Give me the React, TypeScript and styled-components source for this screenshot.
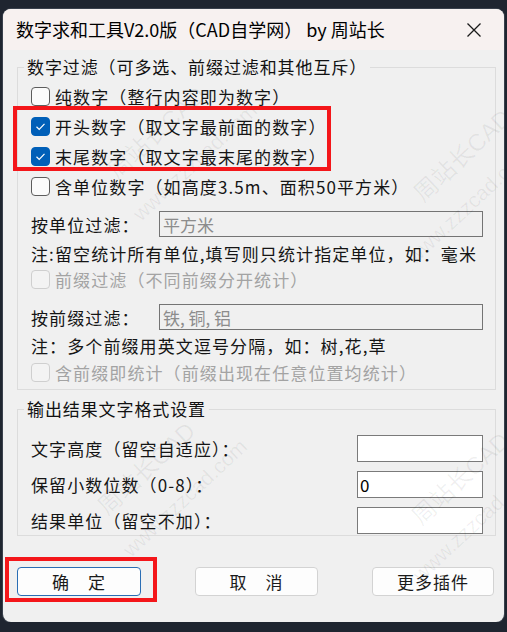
import React from "react";
import styled, { createGlobalStyle } from "styled-components";

const GlobalStyle = createGlobalStyle`
  html, body {
    margin: 0;
    padding: 0;
    background: #1f2530;
  }
  body {
    font-family: "Noto Sans CJK SC", "Noto Sans", sans-serif;
  }
`;

const Window = styled.div`
  position: relative;
  margin: 9px 3px 0;
  height: 613px;
  border-radius: 8px;
  overflow: hidden;
  background: #f0f0f0;
  box-shadow: 0 0 0 1px #39404c;
`;

const TitleBar = styled.div`
  display: flex;
  align-items: center;
  justify-content: space-between;
  height: 41px;
  padding: 0 22px 0 13px;
  background: #f7f1f0;
`;

const Title = styled.span`
  font-size: 18px;
  color: #000;
  line-height: 41px;
`;

const Close = styled.svg`
  width: 16px;
  height: 16px;
`;

const Body = styled.div`
  padding: 7px 8px 0 14px;
`;

const Group = styled.fieldset<{ $mt?: number; $pt: number; $pb: number }>`
  margin: ${(p) => p.$mt ?? 0}px 0 0;
  padding: ${(p) => p.$pt}px 13px ${(p) => p.$pb}px 13px;
  border: 1px solid #dcdcdc;
  min-width: 0;
  display: flex;
  flex-direction: column;
`;

const Legend = styled.legend`
  margin-left: -7px;
  padding: 0 3px;
  font-size: 17px;
  line-height: 20px;
  letter-spacing: 0.9px;
  color: #111;
`;

const Row = styled.div<{ $h: number; $mt?: number; $between?: boolean }>`
  display: flex;
  align-items: center;
  justify-content: ${(p) => (p.$between ? "space-between" : "flex-start")};
  height: ${(p) => p.$h}px;
  margin-top: ${(p) => p.$mt ?? 0}px;
`;

const Box = styled.span<{ $checked?: boolean; $disabled?: boolean }>`
  display: inline-flex;
  align-items: center;
  justify-content: center;
  box-sizing: border-box;
  width: 19px;
  height: 19px;
  margin-right: 5px;
  border-radius: 4px;
  border: 1px solid
    ${(p) => (p.$checked ? "#005fb8" : p.$disabled ? "#cfcfcf" : "#5d5d5d")};
  background: ${(p) => (p.$checked ? "#005fb8" : p.$disabled ? "#f3f3f3" : "#fbfbfb")};
`;

const Text = styled.span<{ $disabled?: boolean }>`
  font-size: 17px;
  letter-spacing: 1.1px;
  white-space: nowrap;
  color: ${(p) => (p.$disabled ? "#a3a3a3" : "#151515")};
`;

const FilterInput = styled.input`
  box-sizing: border-box;
  width: 324px;
  height: 26px;
  margin-left: auto;
  margin-right: -1px;
  padding: 0 3px;
  border: 1px solid #747474;
  background: #f0f0f0;
  font-family: inherit;
  font-size: 17px;
  color: #8c8c8c;
  -webkit-text-fill-color: #8c8c8c;
  outline: none;
`;

const ValueInput = styled.input`
  box-sizing: border-box;
  width: 126px;
  height: 27px;
  margin-right: -1px;
  padding: 0 2px;
  border: 1px solid #7a7a7a;
  background: #fff;
  font-family: inherit;
  font-size: 17px;
  color: #000;
  outline: none;
`;

const ButtonBar = styled.div`
  display: flex;
  justify-content: space-between;
  margin-top: 31px;
  padding-right: 2px;
`;

const Button = styled.button<{ $w: number; $primary?: boolean }>`
  width: ${(p) => p.$w}px;
  height: 29px;
  border-radius: 4px;
  border: 1px solid ${(p) => (p.$primary ? "#2a6db4" : "#d3d3d3")};
  background: #fdfdfd;
  font-family: inherit;
  font-size: 17px;
  color: #1a1a1a;
  letter-spacing: 1px;
  padding: 0;
`;

const Mark = styled.div<{ $x: number; $y: number; $w: number; $h: number }>`
  position: absolute;
  left: ${(p) => p.$x}px;
  top: ${(p) => p.$y}px;
  width: ${(p) => p.$w}px;
  height: ${(p) => p.$h}px;
  box-sizing: border-box;
  border: 4px solid #f4161a;
  pointer-events: none;
`;

const Watermark = styled.span<{ $x: number; $y: number; $size: number }>`
  position: absolute;
  left: ${(p) => p.$x}px;
  top: ${(p) => p.$y}px;
  transform: translate(-50%, -50%) rotate(-43deg);
  font-family: "Liberation Sans", "Noto Sans CJK SC", sans-serif;
  font-size: ${(p) => p.$size}px;
  color: rgba(0, 0, 0, 0.06);
  white-space: nowrap;
  pointer-events: none;
`;

const Check = () => (
  <svg width="13" height="13" viewBox="0 0 13 13">
    <polyline points="2.5,6.8 5.2,9.4 10.5,3.8" fill="none" stroke="#fff" strokeWidth="1.2" />
  </svg>
);

type Option = { label: string; checked?: boolean; disabled?: boolean };

const CheckRow = ({ opt, h, mt }: { opt: Option; h: number; mt?: number }) => (
  <Row $h={h} $mt={mt}>
    <Box $checked={opt.checked} $disabled={opt.disabled}>
      {opt.checked && <Check />}
    </Box>
    <Text $disabled={opt.disabled}>{opt.label}</Text>
  </Row>
);

const numberOptions: Option[] = [
  { label: "纯数字（整行内容即为数字）" },
  { label: "开头数字（取文字最前面的数字）", checked: true },
  { label: "末尾数字（取文字最末尾的数字）", checked: true },
  { label: "含单位数字（如高度3.5m、面积50平方米）" },
];

const outputFields = [
  { label: "文字高度（留空自适应）：", value: "" },
  { label: "保留小数位数（0-8）：", value: "0" },
  { label: "结果单位（留空不加）：", value: "" },
];

export default function App() {
  return (
    <>
      <GlobalStyle />
      <Window>
        <TitleBar>
          <Title>数字求和工具V2.0版（CAD自学网） by 周站长</Title>
          <Close viewBox="0 0 16 16">
            <path d="M1.5 1.5 L14.5 14.5 M14.5 1.5 L1.5 14.5" stroke="#1a1a1a" strokeWidth="1.3" />
          </Close>
        </TitleBar>
        <Body>
          <Group $pt={4} $pb={4}>
            <Legend>数字过滤（可多选、前缀过滤和其他互斥）</Legend>
            {numberOptions.map((o) => (
              <CheckRow key={o.label} opt={o} h={30} />
            ))}
            <Row $h={26} $mt={10}>
              <Text>按单位过滤：</Text>
              <FilterInput disabled defaultValue="平方米" />
            </Row>
            <Row $h={26} $mt={3}>
              <Text>注:留空统计所有单位,填写则只统计指定单位，如：毫米</Text>
            </Row>
            <CheckRow opt={{ label: "前缀过滤（不同前缀分开统计）", disabled: true }} h={26} />
            <Row $h={26} $mt={12}>
              <Text>按前缀过滤：</Text>
              <FilterInput disabled defaultValue="铁, 铜, 铝" />
            </Row>
            <Row $h={26} $mt={2}>
              <Text>注：多个前缀用英文逗号分隔，如：树,花,草</Text>
            </Row>
            <CheckRow opt={{ label: "含前缀即统计（前缀出现在任意位置均统计）", disabled: true }} h={26} mt={1} />
          </Group>
          <Group $mt={9} $pt={16} $pb={1}>
            <Legend>输出结果文字格式设置</Legend>
            {outputFields.map((f, i) => (
              <Row key={f.label} $h={27} $mt={i ? 9 : 0} $between>
                <Text>{f.label}</Text>
                <ValueInput defaultValue={f.value} />
              </Row>
            ))}
          </Group>
          <ButtonBar>
            <Button $w={124} $primary>确　定</Button>
            <Button $w={123}>取　消</Button>
            <Button $w={122}>更多插件</Button>
          </ButtonBar>
        </Body>

        <Watermark $x={152} $y={122} $size={24}>周站长CAD</Watermark>
        <Watermark $x={192} $y={153} $size={21}>www.zzzcad.com</Watermark>
        <Watermark $x={458} $y={145} $size={24}>周站长CAD</Watermark>
        <Watermark $x={466} $y={196} $size={21}>www.zzzcad.com</Watermark>
        <Watermark $x={142} $y={458} $size={24}>周站长CAD</Watermark>
        <Watermark $x={182} $y={489} $size={21}>www.zzzcad.com</Watermark>
        <Watermark $x={456} $y={468} $size={24}>周站长CAD</Watermark>
        <Watermark $x={472} $y={514} $size={21}>www.zzzcad.com</Watermark>

        <Mark $x={10} $y={97} $w={318} $h={65} />
        <Mark $x={2} $y={548} $w={152} $h={45} />
      </Window>
    </>
  );
}
